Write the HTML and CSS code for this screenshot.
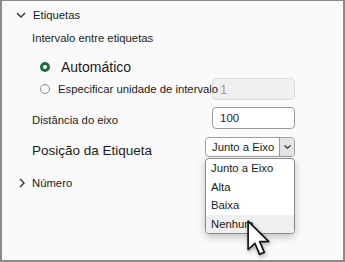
FILE: index.html
```html
<!DOCTYPE html>
<html lang="pt">
<head>
    <meta charset="UTF-8">
    <title>Etiquetas</title>
    <link rel="stylesheet" href="styles.css">
</head>
<body>

    <div class="pane">

        <div class="section-head">
            <svg class="chev" width="10" height="6" viewBox="0 0 10 6"><path d="M1 1 L5 5 L9 1" fill="none" stroke="#333" stroke-width="1.4"/></svg>
            <span>Etiquetas</span>
        </div>

        <div class="row">Intervalo entre etiquetas</div>

        <div class="row opt opt-big">
            <span class="radio checked"></span>
            <span>Automático</span>
        </div>

        <div class="row opt">
            <span class="radio"></span>
            <span class="opt-text">Especificar unidade de intervalo</span>
            <input class="field" type="text" value="1" disabled>
        </div>

        <div class="row field-row">
            <span class="label-low">Distância do eixo</span>
            <input class="field" type="text" value="100">
        </div>

        <div class="row field-row">
            <span class="label-big">Posição da Etiqueta</span>
            <div class="select">
                <span class="select-value">Junto a Eixo</span>
                <span class="select-btn">
                    <svg width="7" height="4" viewBox="0 0 7 4"><path d="M0.5 0.5 L3.5 3.2 L6.5 0.5" fill="none" stroke="#333" stroke-width="1.2"/></svg>
                </span>
                <ul class="menu">
                    <li>Junto a Eixo</li>
                    <li>Alta</li>
                    <li>Baixa</li>
                    <li class="hover">Nenhum</li>
                </ul>
            </div>
        </div>

        <div class="section-head closed">
            <svg class="chev" width="6" height="10" viewBox="0 0 6 10"><path d="M1 1 L5 5 L1 9" fill="none" stroke="#333" stroke-width="1.4"/></svg>
            <span>Número</span>
        </div>

        <svg class="cursor" width="24" height="37" viewBox="0 0 13 20">
            <path d="M0.6 0.6 L0.6 16 L4.3 12.6 L6.8 18.6 L9.4 17.5 L6.9 11.7 L11.8 11.7 Z" fill="#fff" stroke="#111" stroke-width="0.9" stroke-linejoin="round"/>
        </svg>

    </div>

</body>
</html>
```

FILE: styles.css
```css
body {
    margin: 0;
    padding: 0;
    font-family: "Liberation Sans", Arial, sans-serif;
    font-size: 11.3px;
    color: #1b1b1b;
}

.pane {
    position: relative;
    width: 345px;
    height: 262px;
    box-sizing: border-box;
    background-color: #fafafa;
    border: 2px solid #8a8a8a;
    border-top-width: 1px;
    overflow: hidden;
}

.section-head {
    display: flex;
    align-items: center;
    height: 20px;
    margin-top: 4px;
    padding-left: 14px;
}

.section-head .chev {
    margin-right: 7px;
}

.section-head.closed {
    margin-top: 16px;
    padding-left: 17px;
}

.section-head.closed .chev {
    margin-right: 7px;
}

.row {
    display: flex;
    align-items: center;
    height: 20px;
    margin-top: 3px;
    padding-left: 30px;
    padding-right: 48px;
}

.opt {
    padding-left: 38px;
    height: 22px;
    margin-top: 1px;
}

.opt-big {
    margin-top: 9px;
    height: 20px;
    font-size: 14px;
}

.radio {
    flex: none;
    width: 10px;
    height: 10px;
    box-sizing: border-box;
    border: 1px solid #8a8a8a;
    border-radius: 50%;
    background: #fff;
    margin-right: 8px;
}

.radio.checked {
    border: 3px solid #1e6b41;
    margin-right: 11px;
}

.opt-text {
    flex: 1;
    min-width: 0;
    white-space: nowrap;
    position: relative;
    z-index: 1;
}

.field {
    flex: none;
    width: 83px;
    height: 22px;
    box-sizing: border-box;
    border: 1px solid #9a9a9a;
    border-radius: 4px;
    background: #fff;
    padding: 0 0 0 7px;
    font-family: inherit;
    font-size: 11.5px;
    color: #2a2430;
}

.field:disabled {
    background: #f0f0f0;
    border-color: #dcdcdc;
    color: #a89aa8;
    font-size: 13px;
}

.field-row {
    justify-content: space-between;
    height: 22px;
    margin-top: 7px;
}

.label-low {
    padding-top: 4px;
}

.label-big {
    font-size: 13.5px;
    padding-top: 6px;
}

.select {
    position: relative;
    flex: none;
    display: flex;
    align-items: stretch;
    width: 90px;
    height: 20px;
    box-sizing: border-box;
    border: 1px solid #a0a0a0;
    border-radius: 4px;
    background: #fff;
}

.field-row:has(.select) {
    height: 20px;
    margin-top: 8px;
}

.select-value {
    flex: 1;
    display: flex;
    align-items: center;
    padding-left: 6px;
    white-space: nowrap;
}

.select-btn {
    flex: none;
    width: 14px;
    display: flex;
    align-items: center;
    justify-content: center;
    background: #e4e4e4;
    border-left: 1px solid #9a9a9a;
    border-radius: 0 3px 3px 0;
}

.menu {
    position: absolute;
    top: 20px;
    left: -1px;
    width: 90px;
    box-sizing: border-box;
    margin: 0;
    padding: 0;
    list-style: none;
    background: #fff;
    border: 1px solid #8a8a8a;
    border-radius: 4px;
    box-shadow: 0 3px 8px rgba(0, 0, 0, 0.22);
    overflow: hidden;
}

.menu li {
    height: 18.5px;
    line-height: 18.5px;
    padding-left: 5px;
}

.menu li.hover {
    background: #f0f0f0;
}

.cursor {
    position: absolute;
    left: 245px;
    top: 219px;
    filter: drop-shadow(1px 2px 2px rgba(0, 0, 0, 0.3));
}
```
